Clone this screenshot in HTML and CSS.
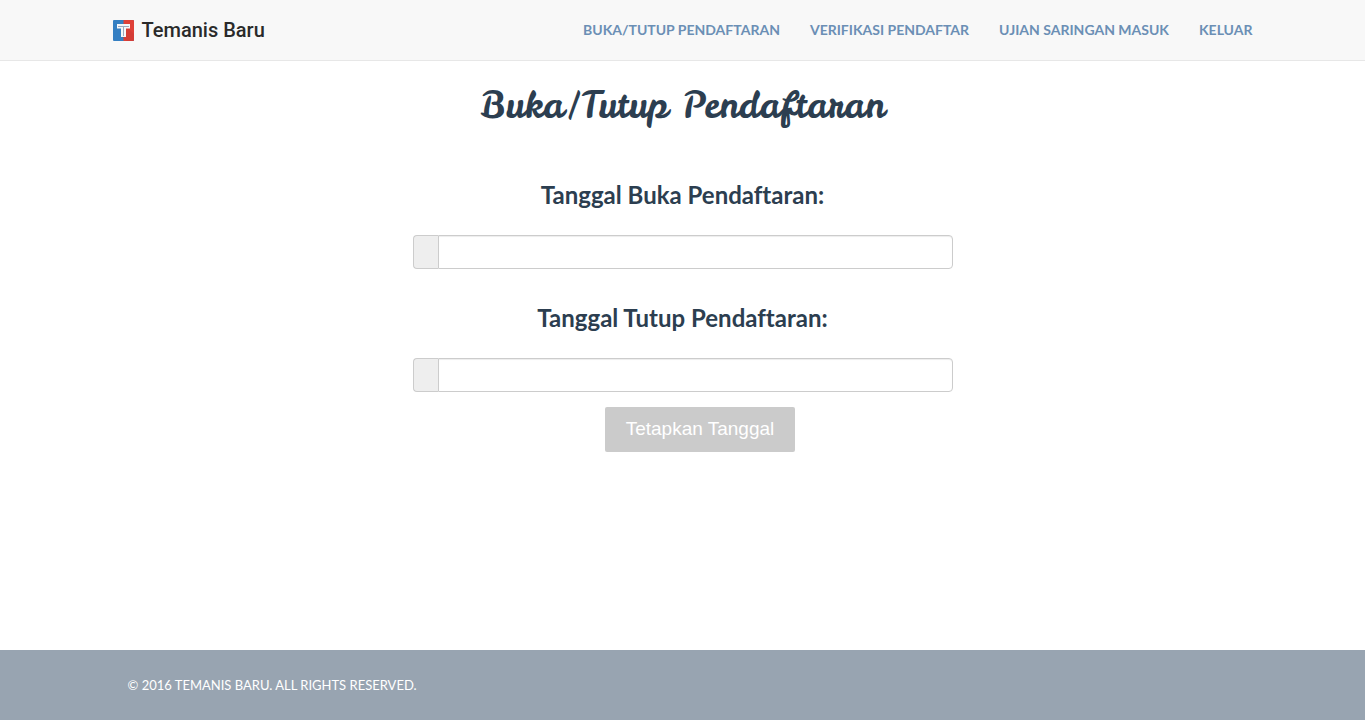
FILE: index.html
```html
<!DOCTYPE html>
<html lang="id">
<head>
<meta charset="utf-8">
<title>Temanis Baru</title>
<link rel="stylesheet" href="styles.css">
</head>
<body>
<header class="navbar">
  <div class="container navbar-inner">
    <a class="brand" href="#">
      <svg class="brand-logo" viewBox="0 0 21 21" aria-hidden="true">
        <rect width="21" height="21" rx="1" fill="#357fc2"/>
        <path d="M10.5 0H20a1 1 0 0 1 1 1v19a1 1 0 0 1-1 1h-9.500z" fill="#df4038"/>
        <path d="M13 9h3l5 5v6a1 1 0 0 1-1 1h-6l-5-4z" fill="#b5302e" opacity=".25"/>
        <path d="M4 4h13v4.500h-4V17H8V8.500H4z" fill="#f5f7fa"/>
        <path d="M5 6.500h11M10.500 6.500V16" fill="none" stroke="#9ea9bd" stroke-width="1"/>
      </svg>
      <span>Temanis Baru</span>
    </a>
    <nav class="menu">
      <a href="#">BUKA/TUTUP PENDAFTARAN</a>
      <a href="#">VERIFIKASI PENDAFTAR</a>
      <a href="#">UJIAN SARINGAN MASUK</a>
      <a href="#">KELUAR</a>
    </nav>
  </div>
</header>
<main class="content">
  <h1 class="title">Buka/Tutup Pendaftaran</h1>
  <form class="date-form">
    <div class="field">
      <label for="open-date">Tanggal Buka Pendaftaran:</label>
      <div class="input-group"><span class="addon"></span><input id="open-date" type="text"></div>
    </div>
    <div class="field">
      <label for="close-date">Tanggal Tutup Pendaftaran:</label>
      <div class="input-group"><span class="addon"></span><input id="close-date" type="text"></div>
    </div>
    <div class="actions"><button class="submit" type="button">Tetapkan Tanggal</button></div>
  </form>
</main>
<footer class="footer">
  <div class="container"><p class="copyright">© 2016 TEMANIS BARU. ALL RIGHTS RESERVED.</p></div>
</footer>
</body>
</html>
```
FILE: styles.css
```css
* { box-sizing: border-box; }
body {
  margin: 0;
  min-height: 100vh;
  padding-bottom: 5px;
  display: flex;
  flex-direction: column;
  background: #fff;
  color: #2c3e50;
  font: 14px/20px Lato, sans-serif;
}
.container { width: 100%; max-width: 1140px; margin: 0 auto; }
.navbar { background: #f8f8f8; border-bottom: 1px solid #e7e7e7; }
.navbar-inner {
  min-height: 60px;
  display: flex;
  align-items: center;
  justify-content: space-between;
}
.brand {
  display: flex;
  align-items: center;
  gap: 8px;
  color: #2a2a2a;
  font: 500 20px/24px Roboto, sans-serif;
  text-decoration: none;
}
.brand-logo { width: 21px; height: 21px; }
.menu { display: flex; gap: 30px; }
.menu a { color: #6b8fb5; font-weight: 700; text-decoration: none; }
.content { flex: 1; padding: 20px 15px; }
.title {
  margin: 0;
  text-align: center;
  font: 400 36px/48px "Leckerli One", "Oleo Script", cursive;
}
.date-form { max-width: 540px; margin: 51px auto 0; }
.field { margin-bottom: 15px; }
.field label {
  display: block;
  padding-bottom: 25px;
  text-align: center;
  font-size: 24px;
  line-height: 30px;
  font-weight: 700;
  font-variant-ligatures: none;
}
.field + .field { margin-top: 34px; }
.input-group { display: flex; height: 34px; }
.addon {
  width: 25px;
  background: #eee;
  border: 1px solid #ccc;
  border-right: 0;
  border-radius: 4px 0 0 4px;
}
.input-group input {
  flex: 1;
  min-width: 0;
  padding: 6px 12px;
  border: 1px solid #ccc;
  border-radius: 0 4px 4px 0;
  background: #fff;
  box-shadow: inset 0 1px 1px rgba(0, 0, 0, 0.075);
  font: inherit;
}
.actions { display: flex; justify-content: center; padding-left: 35px; }
.submit {
  padding: 12px 21px 13px;
  border: 0;
  border-radius: 2px;
  background: #cbcbcb;
  color: #fff;
  font: 19px/20px "Liberation Sans", Arial, sans-serif;
}
.footer { background: #98a4b1; padding: 25px 0; }
.copyright { margin: 0; padding-left: 15px; color: #fff; font-size: 13px; line-height: 20px; }
```
